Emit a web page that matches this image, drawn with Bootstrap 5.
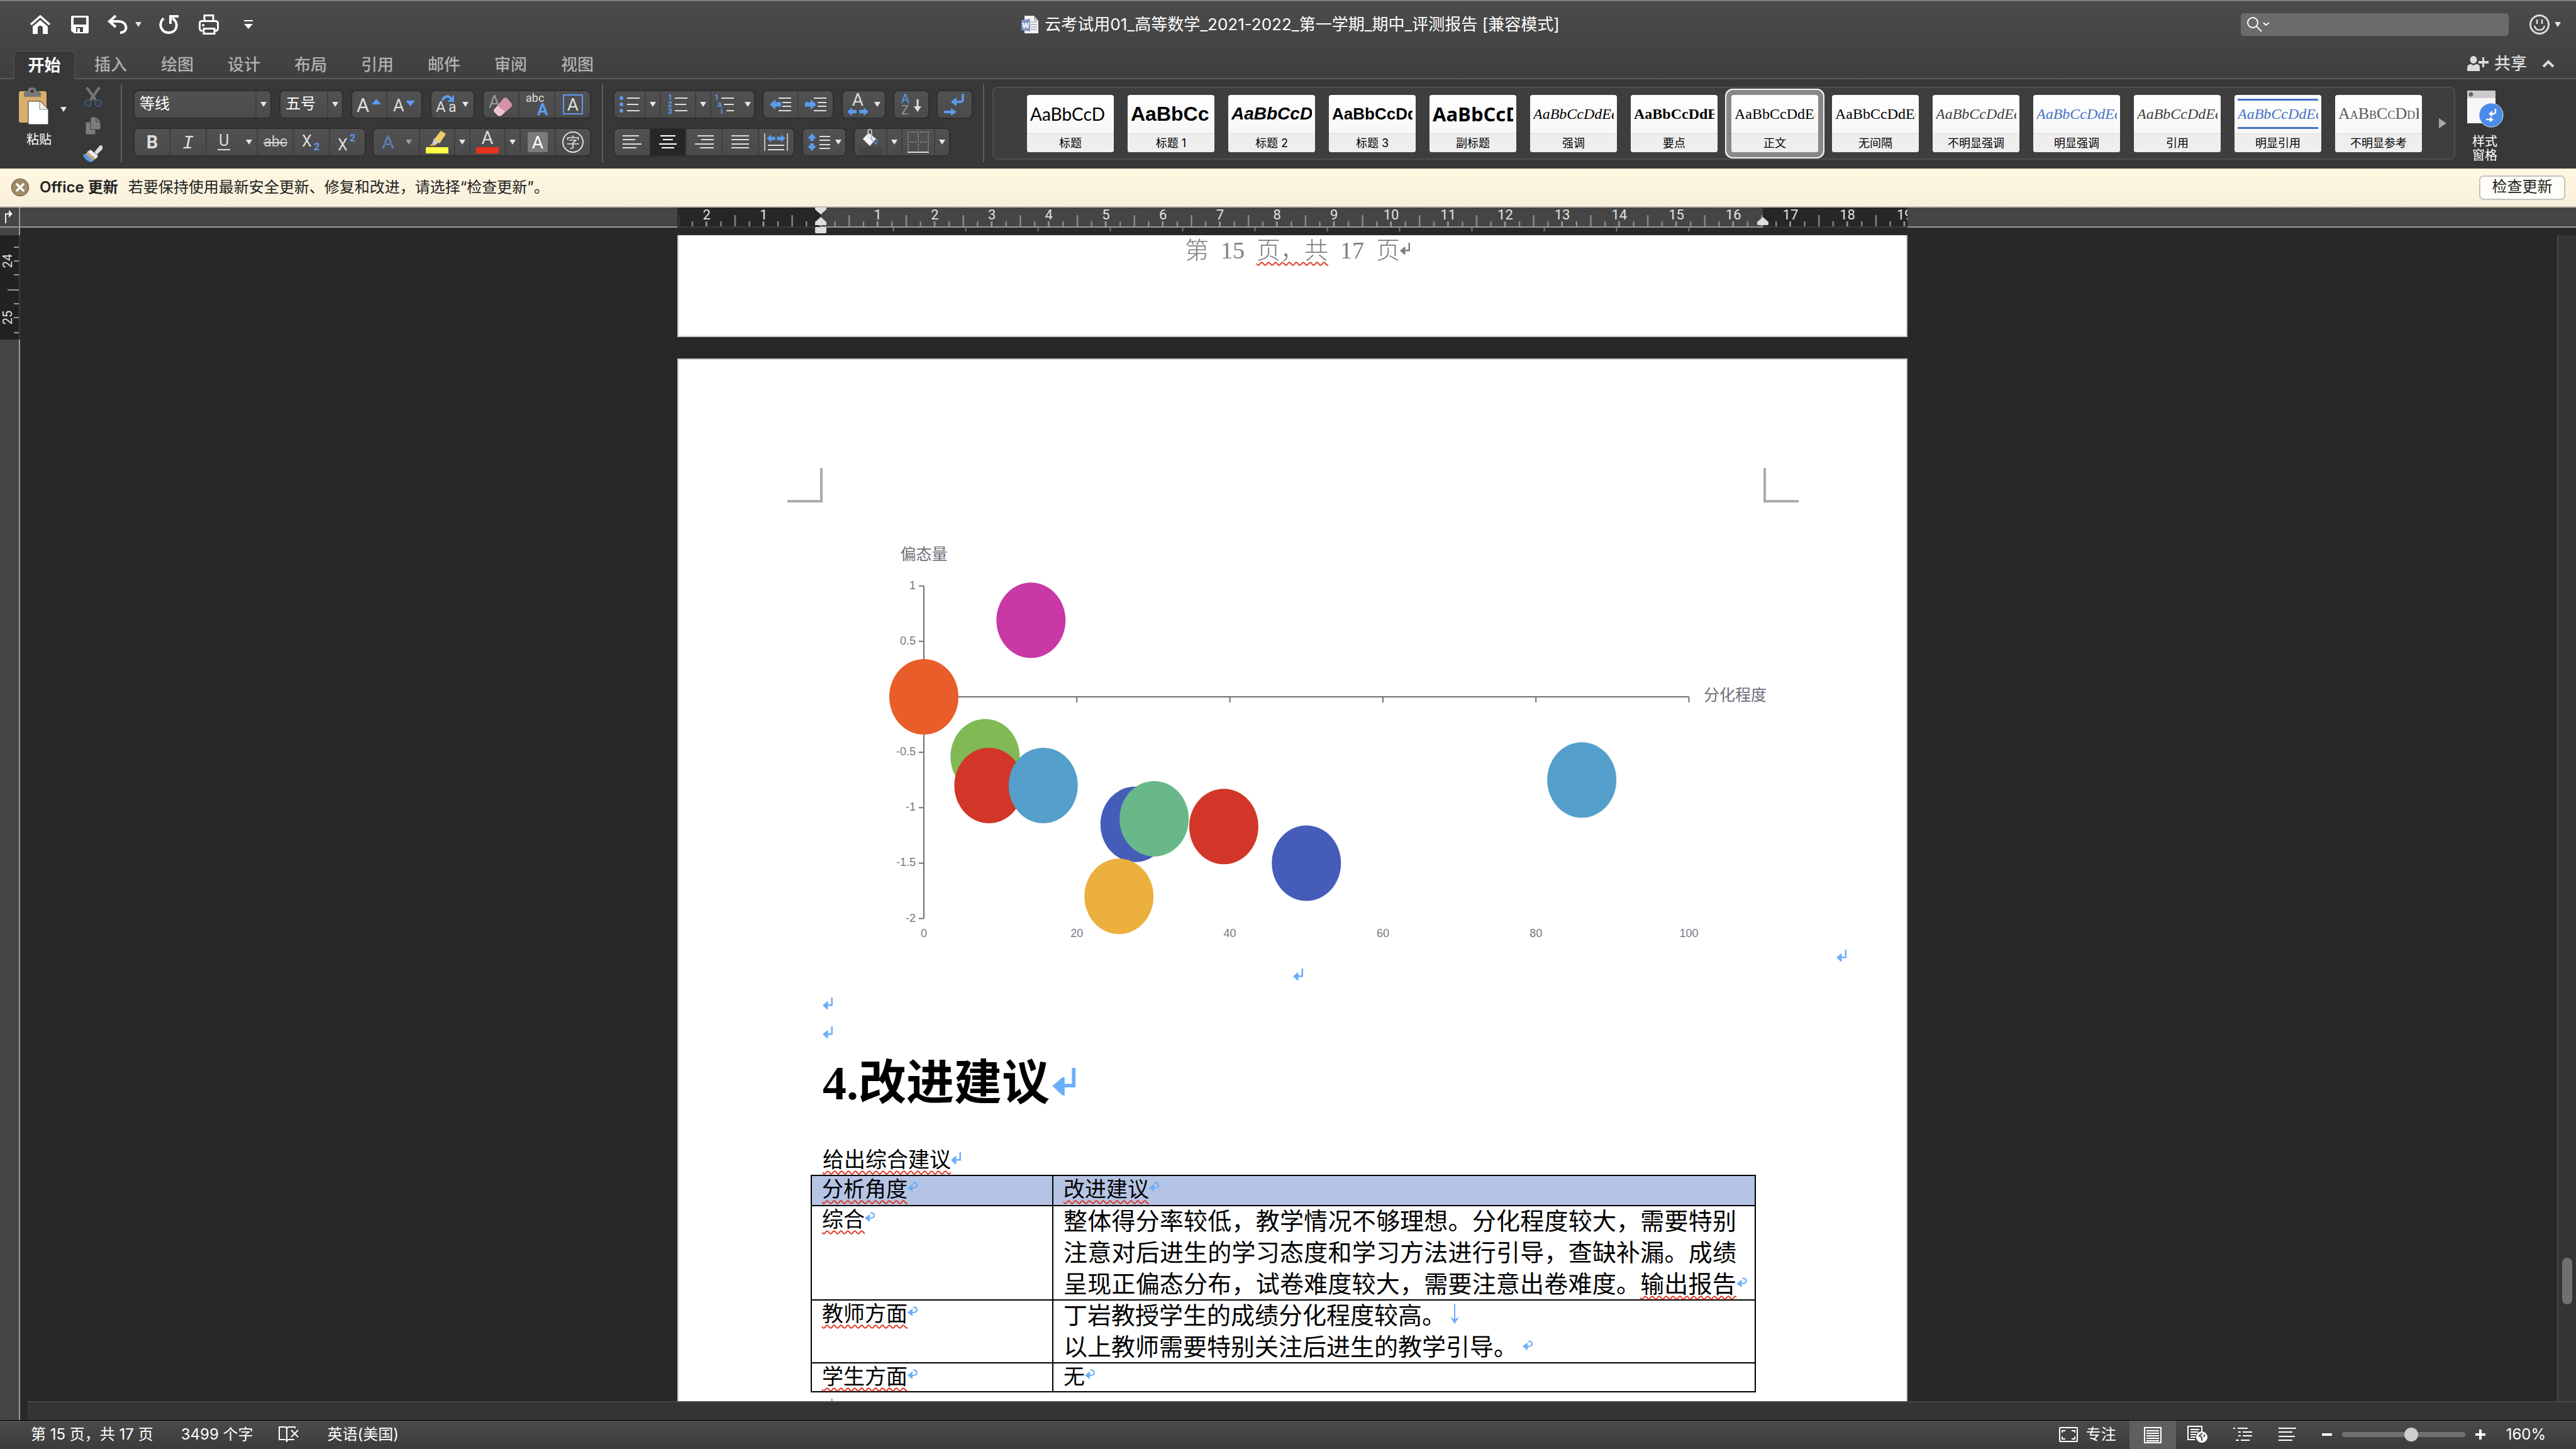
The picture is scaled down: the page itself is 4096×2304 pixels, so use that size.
<!DOCTYPE html>
<html lang="zh-CN">
<head>
<meta charset="utf-8">
<meta name="viewport" content="width=device-width, initial-scale=1">
<title>云考试用01_高等数学_2021-2022_第一学期_期中_评测报告</title>
<link href="https://cdn.jsdelivr.net/npm/bootstrap@5.3.0/dist/css/bootstrap.min.css" rel="stylesheet">
<style>
  :root { --ui: Inter, "Noto Sans CJK SC", sans-serif; --song: "Liberation Serif", "Noto Sans CJK SC", serif; --blue: #5b9bf0; --mark-blue: #6aaefb; }
  body { height: 100vh; overflow: hidden; background: #282828; color: #fff; font: 24px/32px var(--ui); }
  body > * { flex-shrink: 0; }
  button, select, input { font: inherit; color: inherit; }
  button { background: none; border: 0; padding: 0; display: flex; align-items: center; justify-content: center; }
  svg { display: block; flex: none; overflow: visible; }
  svg text { font-family: Roboto, "Noto Sans CJK SC", sans-serif; }
  .topbar { background: linear-gradient(#4b4b4b, #3f3f3f); border-top: 2px solid #7c7c7c; }
  .title-row { height: 74px; }
  .qat { flex: 1 1 0; padding-left: 32px; }
  .qat button { width: 63px; height: 48px; }
  .qat .undo-set { width: 79px; gap: 13px; }
  .doc-title { font-size: 26px; gap: 9px; }
  .title-tools { flex: 1 1 0; padding-right: 24px; gap: 33px; }
  .search-field { width: 426px; height: 36px; background: #6b6b6b; border-radius: 5px; padding-left: 10px; }
  .search-field input { background: none; border: 0; outline: 0; min-width: 0; }
  .tab-row { height: 50px; border-bottom: 2px solid #5c5c5c; padding-left: 17px; }
  .tab-row a { width: 106px; height: 50px; color: #b0b0b0; font-size: 26px; font-weight: 500; text-decoration: none; padding-top: 4px; }
  .tab-row a.current { width: 99px; margin: 4px 3px 0 4px; padding: 0; height: 46px; background: #383838; color: #fff; font-weight: 700; border: 2px solid #4c4c4c; border-bottom: 0; border-radius: 8px 8px 0 0; }
  .tab-tools { font-size: 26px; font-weight: 500; color: #dcdcdc; padding-right: 34px; gap: 24px; height: 50px; }
  .tab-tools button { gap: 9px; }
  .ribbon { height: 142px; background: #383838; padding: 8px 116px 0 0; }
  .vsep { width: 2px; height: 124px; background: #5e5e5e; }
  .vsep, .tool-rows, .paste-set { flex: none; }
  .rib-label { font-size: 20px; line-height: 22px; }
  .paste-set { width: 192px; padding: 5px 0 0 30px; }
  .paste-set .big { width: 48px; flex-direction: column; gap: 12px; }
  .paste-set .big .rib-label { margin-right: -16px; }
  .paste-set .drop { height: 70px; width: 46px; }
  .paste-set .small-set { width: 44px; margin-left: 2px; }
  .tool-rows { padding-top: 9px; gap: 14px; }
  .font-rows { width: 728px; margin: 0 17px 0 18px; }
  .para-rows { width: 572px; margin: 0 16px; }
  .tset { height: 46px; border: 2px solid #2e2e2e; border-radius: 8px; background: linear-gradient(#515151, #4b4b4b); overflow: hidden; }
  .tset button { height: 42px; flex: 1 1 0; }
  .tset > * + * { border-left: 2px solid #404040; }
  .tset button.drop { flex: 0 0 24px; }
  .tset button.drop-plain { flex: 0 0 24px; border-left: 0; }
  .tset button.w56 { flex: 0 0 56px; }
  .tset button.pressed { background: #262626; }
  .tset select { appearance: none; background: none; border: 0; outline: 0; flex: 1 1 0; min-width: 0; padding: 0 0 2px 8px; }
  .w70 { width: 71px; } .w58 { width: 58px; } .w102 { width: 102px; } .w114 { width: 114px; } .w154 { width: 154px; }
  .w173 { width: 173px; } .w220 { width: 220px; } .w226 { width: 226px; } .w289 { width: 289px; } .w348 { width: 348px; } .w370 { width: 370px; }
  .gap-11 { gap: 11px; }
  .gallery { margin: 4px 18px 0 -3px; height: 116px; border: 2px solid #4e4e4e; border-radius: 8px; background: #3e3e3e; padding: 0 12px 0 53px; gap: 22px; }
  .swatch { width: 138px; height: 91px; flex: none; flex-direction: column; align-items: stretch; border-radius: 4px; overflow: hidden; background: linear-gradient(#fff, #f7f7f7 66%); color: #000; }
  .swatch .sample { height: 61px; padding: 0 5px; display: flex; align-items: center; }
  .swatch .sample > span { overflow: hidden; white-space: nowrap; width: 128px; text-align: left; font: 24px/36px "Liberation Serif", serif; }
  .swatch .cap { height: 30px; background: #eee; border-top: 1px solid #dcdcdc; font-size: 18px; line-height: 30px; text-align: center; }
  .swatch.chosen { box-shadow: 0 0 0 8px #888, 0 0 0 10px #f2f2f2; }
  .swatch .sample .sans30 { font: 400 28px/36px Lato, sans-serif; }
  .swatch .sample .h1s { font: 700 32px/36px "Liberation Sans", sans-serif; }
  .swatch .sample .h2s { font: italic 700 28px/36px "Liberation Sans", sans-serif; }
  .swatch .sample .h3s { font: 700 26px/36px "Liberation Sans", sans-serif; }
  .swatch .sample .subs { font: 700 31px/36px "Open Sans", sans-serif; }
  .swatch .sample .ita { font-style: italic; }
  .swatch .sample .strong7 { font-weight: 700; }
  .swatch .sample .blue { color: #4472c4; }
  .swatch .sample .dim { color: #404040; }
  .swatch .sample .caps { color: #5a5a5a; font-variant: small-caps; font-size: 26px; }
  .swatch .sample .ruled { border: solid #4472c4; border-width: 3px 0; line-height: 42px; height: 48px; }
  .pane-btn { flex: none; flex-direction: column; width: 58px; gap: 12px; height: 126px; justify-content: flex-start; padding-top: 10px; }
  .notice { height: 62px; background: linear-gradient(#fff7e0, #f8f0dc); border-bottom: 2px solid #c3bfae; color: #222; padding: 0 17px 0 17px; }
  .notice strong { font-weight: 600; }
  .notice .upd { height: 39px; width: 137px; background: #fffdf8; border: 2px solid #c4c2bd; border-radius: 7px; color: #222; padding-bottom: 2px; }
  .hruler { height: 32px; background: #454545; border-bottom: 2px solid #999; }
  .hruler .track { padding: 0 30px 0 12px; }
  .ruler-corner { width: 32px; border-right: 2px solid #999; }
  .work { min-height: 0; flex: 1 1 0; }
  .vruler { width: 32px; }
  .vruler .off { border-right: 2px solid #999; background: #454545; min-height: 12px; }
  .canvas { min-width: 0; overflow: hidden; }
  .desk { padding-left: 12px; }
  .sheet { width: 1956px; background: #fff; border: 2px solid #c8c8c8; color: #000; }
  .sheet-a { height: 162px; border-top: 0; padding-top: 1px; font: 300 38px/46px var(--song); color: #7f7f7f; margin-top: 12px; }
  .sheet-b { margin-top: 34px; padding: 228px 227px 0 229px; font: 400 34px/46px var(--song); }
  .pm { display: inline-block; color: var(--mark-blue); vertical-align: 4px; }
  .pm-grey { color: #7f7f7f; }
  .pm-cell { vertical-align: 8px; }
  .pm-down { vertical-align: 0; }
  .pm-hang { margin-right: -18px; }
  .wavy { text-decoration: underline wavy #e0301e 2px; text-underline-offset: 5px; text-decoration-skip-ink: none; }
  .corner-box { left: 173px; right: 171px; top: 172px; height: 55px; }
  .corner-l { width: 56px; border: solid #aaa; border-width: 0 4px 4px 0; }
  .corner-r { width: 56px; border: solid #aaa; border-width: 0 0 4px 4px; }
  .chart-line { margin-right: -140px; }
  #labels text { font-family: "Liberation Sans", sans-serif; }
  .sheet h1 { font: 700 76px/108px var(--song); margin: 0 0 46px; }
  .advice { width: 1503px; margin: 0 0 0 -19px; border-collapse: collapse; }
  .advice th, .advice td { border: 2px solid #000; padding: 0 15px 0 16px; vertical-align: top; font-weight: 400; line-height: 44px; }
  .advice th { background: #b5c4e4; height: 48px; }
  .advice p { margin: -1px 14px -1px 0; font: 400 38px/50px var(--song); text-align: justify; }
  .advice .fill-last { text-align-last: justify; }
  .advice .c1 { width: 384px; }
  .vscroll { width: 30px; background: #343434; border-left: 2px solid #464646; margin-top: 12px; padding: 1626px 0 0 6px; }
  .vscroll i { display: block; width: 16px; height: 74px; border-radius: 8px; background: #707070; }
  .hscroll { flex: none; height: 30px; background: #343434; border-top: 2px solid #464646; margin-left: 12px; }
  .status { height: 46px; background: linear-gradient(#4b4b4b, #3b3b3b); border-top: 1px solid #000; padding: 0 48px 2px 49px; gap: 0; }
  .status .words { margin-left: 44px; }
  .status .proof { margin: 0 46px 0 40px; }
  .status .focus-mode { gap: 13px; margin-right: 21px; }
  .status .tile { background: #5f5f5f; width: 74px; height: 46px; margin-bottom: -2px; }
  .status .view { width: 71px; }
  .status .zoom-out { margin-left: 19px; }
  .status .pct { margin-left: 33px; }
  .status input[type=range] { appearance: none; width: 196px; height: 8px; border-radius: 4px; background: #707070; margin: 0 16px; }
  .status input[type=range]::-webkit-slider-thumb { appearance: none; width: 22px; height: 22px; border-radius: 50%; background: #cfcfcf; }
</style>
<script src="https://cdn.jsdelivr.net/npm/bootstrap@5.3.0/dist/js/bootstrap.bundle.min.js"></script>
</head>
<body class="d-flex flex-column">

<svg width="0" height="0" class="position-absolute" aria-hidden="true">
  <defs>
    <symbol id="dn" viewBox="0 0 10 8"><path d="M0 0h10L5 8z" fill="#e6e6e6"/></symbol>
    <symbol id="ret" viewBox="0 0 18 20"><path d="M13.500 0H16v13.500H8.500V19H7L0 12.500 7 6.500h1.500V11h5z" fill="currentColor"/></symbol>
    <symbol id="cellret" viewBox="0 0 17 16"><path d="M9 2c7-2 9 8 0 8H5" fill="none" stroke="currentColor" stroke-width="2.200"/><path d="M0 10 8 3.500V16z" fill="currentColor"/></symbol>
    <symbol id="ar" viewBox="0 0 18 16"><path d="M18 8 9 0v4.500H0v7h9V16z" fill="#5b9bf0"/></symbol>
    <symbol id="al" viewBox="0 0 18 16"><path d="M0 8 9 0v4.500h9v7H9V16z" fill="#5b9bf0"/></symbol>
  </defs>
</svg>

<header class="topbar">
  <div class="title-row d-flex align-items-center">
    <div class="qat d-flex">
      <button aria-label="主页"><svg width="32" height="30" viewBox="0 0 32 30"><path d="M1 15 16 2l15 13" fill="none" stroke="#fff" stroke-width="3.500"/><path d="M16 8 4 18v12h8V20q0-3 4-3t4 3v10h8V18z" fill="#fff"/></svg></button>
      <button aria-label="保存"><svg width="28" height="28" viewBox="0 0 28 28"><path d="M0 2q0-2 2-2h24q2 0 2 2v24q0 2-2 2H5l-5-4zM4 3v11h20V3zM8 18v8h2v-6h4v6h5v-8z" fill="#fff" fill-rule="evenodd"/></svg></button>
      <div class="undo-set d-flex justify-content-center align-items-center"><button class="w-auto" aria-label="撤消"><svg width="31" height="30" viewBox="0 0 31 30"><path d="M13 1 3 10l10 9M3 10h14c16 0 16 18 3 18" fill="none" stroke="#fff" stroke-width="4"/></svg></button><svg width="10" height="8"><use href="#dn"/></svg></div>
      <button aria-label="恢复"><svg width="30" height="30" viewBox="0 0 30 30"><path d="M6 5C-4 16 4 28 14 28c14 0 17-16 6-23" fill="none" stroke="#fff" stroke-width="4"/><path d="M17 14V2h13" fill="none" stroke="#fff" stroke-width="4"/></svg></button>
      <button aria-label="打印"><svg width="32" height="32" viewBox="0 0 32 32" fill="none" stroke="#fff" stroke-width="3"><path d="M9 11V1.500h14V11M6 26c-3 0-4.500-1-4.500-4v-8q0-3.500 4-3.500h21q4 0 4 3.500v8c0 3-1.500 4-4.500 4"/><path d="M8 22.500h17v8H8z"/><path d="M5 17h4"/></svg></button>
      <button aria-label="自定义"><svg width="14" height="14" viewBox="0 0 14 14"><path d="M0 0h14v2H0zM0 6h14l-7 8z" fill="#fff"/></svg></button>
    </div>
    <div class="doc-title d-flex align-items-center">
      <svg width="28" height="28" viewBox="0 0 28 28"><path d="M5 0h15l7 8v20H5z" fill="#f4f4f4"/><path d="M20 0v8h7z" fill="#bbb"/><path d="M15 10h10M15 14h10M15 18h10M15 22h10" stroke="#aaa" stroke-width="1.500"/><path d="M0 7 14 5v20L0 23z" fill="#7f96c8"/><text x="7" y="20" font-size="13" font-weight="700" text-anchor="middle" fill="#fff">W</text></svg>
      <span>云考试用01_高等数学_2021-2022_第一学期_期中_评测报告 [兼容模式]</span>
    </div>
    <div class="title-tools d-flex justify-content-end align-items-center">
      <label class="search-field d-flex align-items-center"><svg width="36" height="24" viewBox="0 0 36 24" fill="none" stroke="#fff" stroke-width="2"><circle cx="9" cy="9" r="8"/><path d="m15 15 8 8M26 9l4 4 5-4"/></svg><input type="search" aria-label="搜索"></label>
      <button class="gap-2" aria-label="反馈"><svg width="32" height="32" viewBox="0 0 32 32" fill="none" stroke="#ddd" stroke-width="3"><circle cx="16" cy="16" r="14.500"/><path d="M8 18c2 9 14 9 16 0M12 8v7M20 8v7" stroke-width="2.500"/></svg><svg width="10" height="8"><use href="#dn"/></svg></button>
    </div>
  </div>
  <nav class="tab-row d-flex">
    <a href="#" class="current d-flex align-items-center justify-content-center">开始</a>
    <a href="#" class="d-flex align-items-center justify-content-center">插入</a>
    <a href="#" class="d-flex align-items-center justify-content-center">绘图</a>
    <a href="#" class="d-flex align-items-center justify-content-center">设计</a>
    <a href="#" class="d-flex align-items-center justify-content-center">布局</a>
    <a href="#" class="d-flex align-items-center justify-content-center">引用</a>
    <a href="#" class="d-flex align-items-center justify-content-center">邮件</a>
    <a href="#" class="d-flex align-items-center justify-content-center">审阅</a>
    <a href="#" class="d-flex align-items-center justify-content-center">视图</a>
    <div class="tab-tools d-flex align-items-center ms-auto">
      <button><svg width="34" height="24" viewBox="0 0 34 24" fill="#dcdcdc"><ellipse cx="10" cy="6" rx="5.500" ry="6"/><path d="M0 24V18q1-5 6-5l4 2 4-2q6 0 6 5v6zM24 2h3v6h7v4h-7v6h-3v-6h-6V8h6z"/></svg>共享</button>
      <button aria-label="折叠功能区"><svg width="20" height="12" viewBox="0 0 20 12"><path d="m2 11 8-8 8 8" fill="none" stroke="#dcdcdc" stroke-width="4"/></svg></button>
    </div>
  </nav>
</header>

<section class="ribbon d-flex">
  <div class="paste-set d-flex align-items-start">
    <button class="big">
      <svg width="48" height="60" viewBox="0 0 48 60"><rect y="6" width="44" height="50" rx="3" fill="#d9ad6c"/><path d="M8 15V10q0-4 6-4 0-6 7-6t7 6q7 0 7 4v5z" fill="#777"/><circle cx="21" cy="6" r="2.500" fill="#383838"/><path d="M15 22h19l13 13v24H15z" fill="#fff" stroke="#333"/><path d="M33 22v13h13" fill="#eee" stroke="#888"/></svg>
      <span class="rib-label">粘贴</span>
    </button>
    <button class="drop" aria-label="粘贴选项"><svg width="10" height="8"><use href="#dn"/></svg></button>
    <div class="small-set d-flex flex-column align-items-center gap-3">
      <button aria-label="剪切"><svg width="28" height="31" viewBox="0 0 28 31"><path d="M4 0 18 20M24 0 10 20" stroke="#777" stroke-width="4"/><g fill="none" stroke="#3d5578" stroke-width="2.500"><circle cx="6" cy="25" r="4.700"/><circle cx="22" cy="25" r="4.700"/></g></svg></button>
      <button aria-label="复制"><svg width="24" height="28" viewBox="0 0 24 28" fill="#7c7c7c" stroke="#3a3a3a"><path d="M0 8h16v20H0z"/><path d="M8 0h9l7 8v12H8z"/><path d="M17 0v8h7"/></svg></button>
      <button aria-label="格式刷"><svg width="32" height="28" viewBox="0 0 32 28"><path d="m18 12 9-11 4 1v5l-9 9z" fill="#ddd"/><path d="m12 8 12 10-4 5L6 12z" fill="#eee"/><path d="M8 12 20 22l-4 4L3 15z" fill="#b7a58c"/><path d="m3 15 13 11-4 2Q2 24 0 16z" fill="#5b9bf0"/></svg></button>
    </div>
  </div>
  <div class="vsep"></div>
  <div class="tool-rows font-rows d-flex flex-column">
    <div class="d-flex justify-content-between">
      <div class="tset d-flex w220"><select aria-label="字体"><option>等线</option></select><button class="drop" aria-label="字体列表"><svg width="10" height="8"><use href="#dn"/></svg></button></div>
      <div class="tset d-flex w102"><select aria-label="字号"><option>五号</option></select><button class="drop" aria-label="字号列表"><svg width="10" height="8"><use href="#dn"/></svg></button></div>
      <div class="tset d-flex w114">
        <button aria-label="增大字号"><svg width="40" height="30" viewBox="0 0 40 30"><text x="0" y="27" font-size="31" fill="#ddd">A</text><path d="M24 15h15l-7.500-9z" fill="#5b9bf0"/></svg></button>
        <button aria-label="减小字号"><svg width="36" height="30" viewBox="0 0 36 30"><text x="0" y="26" font-size="27" fill="#ddd">A</text><path d="M20 9h15l-7.500 9z" fill="#5b9bf0"/></svg></button>
      </div>
      <div class="tset d-flex w70"><button class="gap-2" aria-label="更改大小写"><svg width="32" height="30" viewBox="0 0 32 30"><text x="-2" y="27" font-size="24" fill="#ddd">A</text><text x="18" y="27" font-size="23" fill="#ddd">a</text><path d="M8 9Q14-2 22 5" fill="none" stroke="#5b9bf0" stroke-width="4"/><path d="M27 0v11H16z" fill="#5b9bf0"/></svg><svg width="10" height="8"><use href="#dn"/></svg></button></div>
      <div class="tset d-flex w173">
        <button aria-label="清除格式"><svg width="38" height="38" viewBox="0 0 38 38"><text x="-1" y="24" font-size="28" fill="#999">A</text><path d="m8 27 15-18q3-2 6 1l6 7q2 3 0 6L20 36q-4 3-7 0l-5-5q-2-2 0-4z" fill="#d792a8"/><path d="m8 27 5-6 12 10-5 5q-4 3-7 0l-5-5q-2-2 0-4z" fill="#f0c5d2"/></svg></button>
        <button aria-label="拼音指南"><svg width="36" height="36" viewBox="0 0 36 36"><text x="0" y="14" font-size="18" fill="#ddd">abc</text><text x="18" y="35" font-size="26" font-weight="700" fill="#5b9bf0">A</text></svg></button>
        <button aria-label="字符边框"><svg width="32" height="32" viewBox="0 0 32 32"><rect x="1" y="1" width="30" height="30" fill="none" stroke="#5b9bf0" stroke-width="2"/><text x="16" y="26" font-size="28" text-anchor="middle" fill="#ddd">A</text></svg></button>
      </div>
    </div>
    <div class="d-flex justify-content-between">
      <div class="tset d-flex w370">
        <button aria-label="加粗"><svg width="20" height="22"><text x="10" y="21" font-size="29" font-weight="700" text-anchor="middle" fill="#ddd">B</text></svg></button>
        <button aria-label="倾斜"><svg width="16" height="22"><text x="8" y="21" font-size="30" font-style="italic" text-anchor="middle" fill="#ddd" style="font-family:'Liberation Mono'">I</text></svg></button>
        <button aria-label="下划线"><svg width="20" height="26"><text x="10" y="19" font-size="25" text-anchor="middle" fill="#ddd">U</text><path d="M0 25h20" stroke="#ddd" stroke-width="2"/></svg></button>
        <button class="drop-plain" aria-label="下划线样式"><svg width="10" height="8"><use href="#dn"/></svg></button>
        <button aria-label="删除线"><svg width="38" height="22"><text x="19" y="18" font-size="23" text-anchor="middle" fill="#ccc">abc</text><path d="M0 12h38" stroke="#ddd" stroke-width="2"/></svg></button>
        <button aria-label="下标"><svg width="30" height="28"><text x="0" y="21" font-size="25" fill="#ddd">X</text><text x="19" y="27" font-size="16" font-weight="700" fill="#5b9bf0">2</text></svg></button>
        <button aria-label="上标"><svg width="30" height="28"><text x="0" y="27" font-size="25" fill="#ddd">X</text><text x="19" y="13" font-size="16" font-weight="700" fill="#5b9bf0">2</text></svg></button>
      </div>
      <div class="tset d-flex w348">
        <button class="gap-3" aria-label="文本效果"><svg width="24" height="26"><text x="12" y="23" font-size="30" text-anchor="middle" fill="#8a98a8" stroke="#3f6795" stroke-width="1">A</text></svg><svg width="10" height="8" opacity=".5"><use href="#dn"/></svg></button>
        <button class="w56" aria-label="突出显示"><svg width="36" height="36" viewBox="0 0 36 36"><rect y="26" width="36" height="10" rx="1" fill="#ffff45"/><path d="m24 0 8 5-10 15-9-6z" fill="#f2cf68"/><path d="m13 12 8 6-6 5-5-2z" fill="#ccc"/><path d="m10 20-4 4h9z" fill="#e0ae3a"/></svg></button>
        <button class="drop" aria-label="突出显示颜色"><svg width="10" height="8"><use href="#dn"/></svg></button>
        <button class="w56" aria-label="字体颜色"><svg width="36" height="36" viewBox="0 0 36 36"><rect y="26" width="36" height="10" rx="1" fill="#e8311f"/><text x="18" y="21" font-size="29" text-anchor="middle" fill="#ddd">A</text></svg></button>
        <button class="drop" aria-label="字体颜色列表"><svg width="10" height="8"><use href="#dn"/></svg></button>
        <button class="w56" aria-label="字符底纹"><svg width="32" height="32" viewBox="0 0 32 32"><rect width="32" height="32" rx="3" fill="#7b7b7b"/><text x="16" y="26" font-size="28" text-anchor="middle" fill="#fff">A</text></svg></button>
        <button class="w56" aria-label="带圈字符"><svg width="34" height="34" viewBox="0 0 34 34"><circle cx="17" cy="17" r="16" fill="none" stroke="#ddd" stroke-width="2"/><text x="17" y="25" font-size="22" text-anchor="middle" fill="#ddd">字</text></svg></button>
      </div>
    </div>
  </div>
  <div class="vsep"></div>
  <div class="tool-rows para-rows d-flex flex-column">
    <div class="d-flex justify-content-between">
      <div class="tset d-flex w226">
        <button aria-label="项目符号"><svg width="32" height="28" viewBox="0 0 32 28"><g fill="#5b9bf0"><circle cx="3" cy="4" r="3"/><circle cx="3" cy="14" r="3"/><circle cx="3" cy="24" r="3"/></g><path d="M12 4h20M12 14h18M12 24h20" stroke="#ddd" stroke-width="2"/></svg></button>
        <button class="drop" aria-label="项目符号列表"><svg width="10" height="8"><use href="#dn"/></svg></button>
        <button class="w56" aria-label="编号"><svg width="32" height="30" viewBox="0 0 32 30"><g font-size="12" font-weight="700" fill="#5b9bf0"><text x="0" y="8">1</text><text x="0" y="19">2</text><text x="0" y="30">3</text></g><path d="M11 5h20M11 15h18M11 25h20" stroke="#ddd" stroke-width="2"/></svg></button>
        <button class="drop" aria-label="编号列表"><svg width="10" height="8"><use href="#dn"/></svg></button>
        <button class="gap-3" style="flex:0 0 70px" aria-label="多级列表"><svg width="32" height="30" viewBox="0 0 32 30"><g font-size="12" font-weight="700" fill="#5b9bf0"><text x="0" y="8">1</text><text x="5" y="19">a</text><text x="10" y="30">i</text></g><path d="M11 5h20M15 15h16M19 25h12" stroke="#ddd" stroke-width="2"/></svg><svg width="10" height="8"><use href="#dn"/></svg></button>
      </div>
      <div class="tset d-flex w114">
        <button aria-label="减少缩进"><svg width="34" height="22" viewBox="0 0 34 22"><use href="#al" y="2" width="18" height="18"/><path d="M14 1h20M20 8h14M20 14h14M14 21h20" stroke="#ddd" stroke-width="2"/></svg></button>
        <button aria-label="增加缩进"><svg width="34" height="22" viewBox="0 0 34 22"><use href="#ar" y="2" width="18" height="18"/><path d="M14 1h20M20 8h14M20 14h14M14 21h20" stroke="#ddd" stroke-width="2"/></svg></button>
      </div>
      <div class="tset d-flex w70"><button class="gap-2" aria-label="中文版式"><svg width="36" height="36" viewBox="0 0 36 36"><text x="18" y="20" font-size="28" text-anchor="middle" fill="#ddd">A</text><use href="#al" y="23" width="17" height="13"/><use href="#ar" x="19" y="23" width="17" height="13"/></svg><svg width="10" height="8"><use href="#dn"/></svg></button></div>
      <div class="tset d-flex w58"><button aria-label="排序"><svg width="32" height="34" viewBox="0 0 32 34"><text x="0" y="15" font-size="20" fill="#5b9bf0">A</text><text x="0" y="33" font-size="20" fill="#999">Z</text><path d="M26 9v14" stroke="#ddd" stroke-width="3"/><path d="M20 20h12l-6 9z" fill="#ddd"/></svg></button></div>
      <div class="tset d-flex w58"><button aria-label="显示编辑标记"><svg width="34" height="36" viewBox="0 0 34 36"><path d="M30 1v9q0 4-5 4h-6" fill="none" stroke="#5b9bf0" stroke-width="3.500"/><path d="m11 14 9-7v14z" fill="#5b9bf0"/><path d="M0 30h12" stroke="#5b9bf0" stroke-width="4"/><path d="m20 30-9-6v12z" fill="#5b9bf0"/></svg></button></div>
    </div>
    <div class="d-flex gap-11">
      <div class="tset d-flex w289">
        <button aria-label="左对齐"><svg width="30" height="22" viewBox="0 0 30 22"><path d="M0 1h26M0 7h20M0 14h30M0 20h22" stroke="#ddd" stroke-width="2"/></svg></button>
        <button class="pressed" aria-label="居中"><svg width="28" height="22" viewBox="0 0 28 22"><path d="M2 1h24M6 7h16M0 14h28M4 20h20" stroke="#fff" stroke-width="2"/></svg></button>
        <button aria-label="右对齐"><svg width="30" height="22" viewBox="0 0 30 22"><path d="M4 1h26M10 7h20M0 14h30M8 20h22" stroke="#ddd" stroke-width="2"/></svg></button>
        <button aria-label="两端对齐"><svg width="28" height="22" viewBox="0 0 28 22"><path d="M0 1h28M0 7h28M0 14h28M0 20h28" stroke="#ddd" stroke-width="2"/></svg></button>
        <button aria-label="分散对齐"><svg width="38" height="28" viewBox="0 0 38 28"><path d="M1 0v28M37 0v28" stroke="#bbb" stroke-width="2"/><use href="#al" x="4" y="2" width="14" height="12"/><use href="#ar" x="20" y="2" width="14" height="12"/><path d="M6 19h26M6 26h26" stroke="#ddd" stroke-width="2"/></svg></button>
      </div>
      <div class="tset d-flex w70"><button class="gap-2" aria-label="行距"><svg width="36" height="28" viewBox="0 0 36 28"><path d="M7 0 0 8h4v4h6V8h4zM7 28l-7-8h4v-4h6v4h4z" fill="#5b9bf0"/><path d="M19 5h17M19 11h17M19 18h17M19 24h17" stroke="#ddd" stroke-width="2"/></svg><svg width="10" height="8"><use href="#dn"/></svg></button></div>
      <div class="tset d-flex w154">
        <button aria-label="底纹"><svg width="34" height="38" viewBox="0 0 34 38"><rect y="28" width="34" height="10" rx="1" fill="#464646" stroke="#3a3a3a"/><path d="m14 4 12 10-10 11L5 14z" fill="#f4f4f4"/><path d="M13 8V2q0-3 3-3t3 3v12" fill="none" stroke="#bbb" stroke-width="2"/><path d="m11 7 15 16q4-2 2-8l-9-8q9 6 9 15" fill="#5b9bf0"/></svg></button>
        <button class="drop" aria-label="底纹颜色"><svg width="10" height="8"><use href="#dn"/></svg></button>
        <button aria-label="边框"><svg width="34" height="34" viewBox="0 0 34 34"><path d="M0 1h34M0 17h34M1 0v30M17 0v30M33 0v30" stroke="#8d8d8d" stroke-width="2" stroke-dasharray="2 2"/><path d="M0 33h34" stroke="#ddd" stroke-width="2"/></svg></button>
        <button class="drop" aria-label="边框列表"><svg width="10" height="8"><use href="#dn"/></svg></button>
      </div>
    </div>
  </div>
  <div class="vsep me-3"></div>
  <div class="gallery d-flex align-items-center flex-fill">
    <button class="swatch"><span class="sample"><span class="sans30">AaBbCcD</span></span><span class="cap">标题</span></button>
    <button class="swatch"><span class="sample"><span class="h1s">AaBbCc</span></span><span class="cap">标题 1</span></button>
    <button class="swatch"><span class="sample"><span class="h2s">AaBbCcD</span></span><span class="cap">标题 2</span></button>
    <button class="swatch"><span class="sample"><span class="h3s">AaBbCcDd</span></span><span class="cap">标题 3</span></button>
    <button class="swatch"><span class="sample"><span class="subs">AaBbCcD</span></span><span class="cap">副标题</span></button>
    <button class="swatch"><span class="sample"><span class="ita">AaBbCcDdEe</span></span><span class="cap">强调</span></button>
    <button class="swatch"><span class="sample"><span class="strong7">AaBbCcDdE</span></span><span class="cap">要点</span></button>
    <button class="swatch chosen"><span class="sample"><span>AaBbCcDdEe</span></span><span class="cap">正文</span></button>
    <button class="swatch"><span class="sample"><span>AaBbCcDdEe</span></span><span class="cap">无间隔</span></button>
    <button class="swatch"><span class="sample"><span class="ita dim">AaBbCcDdEe</span></span><span class="cap">不明显强调</span></button>
    <button class="swatch"><span class="sample"><span class="ita blue">AaBbCcDdEe</span></span><span class="cap">明显强调</span></button>
    <button class="swatch"><span class="sample"><span class="ita dim">AaBbCcDdEe</span></span><span class="cap">引用</span></button>
    <button class="swatch"><span class="sample"><span class="ita blue ruled">AaBbCcDdEe</span></span><span class="cap">明显引用</span></button>
    <button class="swatch"><span class="sample"><span class="caps">AaBbCcDdE</span></span><span class="cap">不明显参考</span></button>
    <button class="ms-auto" aria-label="更多样式"><svg width="12" height="16" viewBox="0 0 12 16"><path d="M0 0v16l12-8z" fill="#a8a8a8"/></svg></button>
  </div>
  <button class="pane-btn">
    <svg width="56" height="58" viewBox="0 0 56 58"><path d="M0 2q0-2 2-2h41q2 0 2 2v50H0z" fill="#f7f7f7"/><path d="M0 2q0-2 2-2h41q2 0 2 2v10H0z" fill="#ccc"/><circle cx="6" cy="6" r="3.500" fill="#666"/><circle cx="38" cy="39" r="19" fill="#4a8be8" stroke="#dbe6f8" stroke-width="1"/><path d="M45 29v5q0 3-5 3h-2M30 46h6" fill="none" stroke="#fff" stroke-width="2.500"/><path d="m34 37 6-5v10zM42 46l-6-4.500v9z" fill="#fff"/></svg>
    <span class="rib-label">样式<br>窗格</span>
  </button>
</section>

<section class="notice d-flex align-items-center">
  <button class="me-3" aria-label="关闭"><svg width="30" height="30" viewBox="0 0 30 30"><circle cx="15" cy="15" r="13.500" fill="#a08c69" stroke="#7f6d4d" stroke-width="1.500"/><path d="m9 9 12 12M21 9 9 21" stroke="#fff" stroke-width="3.500"/></svg></button>
  <strong class="me-3">Office 更新</strong>
  <span>若要保持使用最新安全更新、修复和改进，请选择“检查更新”。</span>
  <button class="upd ms-auto">检查更新</button>
</section>

<div class="hruler d-flex">
  <div class="ruler-corner"><svg width="30" height="30" viewBox="0 0 30 30"><path d="M9 25V10h7" fill="none" stroke="#eee" stroke-width="2"/><path d="m14 4 6 6-6 6z" fill="#eee"/></svg></div>
  <div class="track flex-fill d-flex justify-content-center">
    <svg id="hr" width="1956" height="32" viewBox="0 0 1956 32">
      <defs>
        <pattern id="tk" x="227" width="90.7" height="32" patternUnits="userSpaceOnUse"><path d="M1 22v8M23.700 22v8M46.300 12v18M69 22v8M91 22v8" stroke="#999" stroke-width="2"/></pattern>
        <clipPath id="rc"><path d="M0 0h1956v32H0z"/></clipPath>
      </defs>
      <path d="M0 0h228v32H0zM1726 0h230v32h-230z" fill="#262626"/>
      <path d="M0 31h228M1726 31h230" stroke="#3a3a3a" stroke-width="2"/>
      <path d="M2 0h1954v30H2z" fill="url(#tk)"/>
      <g id="hnums" font-size="22" fill="#e2e2e2" text-anchor="middle" clip-path="url(#rc)"></g>
      <path id="stops" stroke="#777" stroke-width="2"/>
      <g fill="#dedede"><path d="M219 0h18v3l-9 8-9-8zM228 15l9 8v5h-18v-5z"/><rect x="219" y="31" width="18" height="10" rx="2"/><path d="m1726 15 9 8v3q0 2-2 2h-14q-2 0-2-2v-3z"/></g>
    </svg>
  </div>
</div>

<main class="work d-flex">
  <div class="vruler d-flex flex-column">
    <div class="off"></div>
    <svg width="32" height="166" viewBox="0 0 32 166"><path d="M0 0h32v166H0z" fill="#222"/><path d="M22 19h8M22 41h8M22 63h8M12 87h18M22 109h8M22 131h8M22 155h8" stroke="#999" stroke-width="2"/><path d="M31 0v166" stroke="#3a3a3a" stroke-width="2"/><g font-size="20" fill="#e2e2e2" text-anchor="middle"><text transform="translate(19 41) rotate(-90)">24</text><text transform="translate(19 131) rotate(-90)">25</text></g></svg>
    <div class="off flex-fill"></div>
  </div>
  <div class="flex-fill d-flex flex-column canvas">
    <div class="d-flex work">
      <div class="flex-fill canvas desk">
        <div class="sheet sheet-a mx-auto text-center">第&ensp;15&ensp;<span class="wavy">页，共</span>&ensp;17&ensp;页<svg class="pm pm-grey pm-hang" width="18" height="22"><use href="#ret"/></svg></div>
        <article class="sheet sheet-b mx-auto position-relative">
          <div class="corner-box d-flex justify-content-between position-absolute"><div class="corner-l"></div><div class="corner-r"></div></div>
          <div class="chart-line d-flex align-items-end">
            <svg id="chart" width="1612" height="730" viewBox="0 0 1612 730" role="img" aria-label="分化程度与偏态量">
              <g stroke="#6e7079" stroke-width="2" fill="none"><path id="axes"/></g>
              <g id="labels" font-size="18" fill="#777983"></g>
              <g font-size="25" fill="#6e7079"><text x="161" y="90" text-anchor="middle">偏态量</text><text x="1401" y="314">分化程度</text></g>
              <g id="bubbles"></g>
            </svg>
            <svg class="pm" width="18" height="20"><use href="#ret"/></svg>
          </div>
          <div class="text-center"><svg class="pm pm-hang" width="18" height="20"><use href="#ret"/></svg></div>
          <div><svg class="pm" width="18" height="20"><use href="#ret"/></svg></div>
          <div><svg class="pm" width="18" height="20"><use href="#ret"/></svg></div>
          <h1>4.改进建议<svg class="pm ms-1" width="42" height="46"><use href="#ret"/></svg></h1>
          <div><span class="wavy">给出综合建议</span><svg class="pm" width="18" height="20"><use href="#ret"/></svg></div>
          <table class="advice">
            <thead><tr><th class="c1" scope="col"><span class="wavy">分析角度</span><svg class="pm pm-cell" width="17" height="16"><use href="#cellret"/></svg></th><th scope="col"><span class="wavy">改进建议</span><svg class="pm pm-cell" width="17" height="16"><use href="#cellret"/></svg></th></tr></thead>
            <tbody>
              <tr><td><span class="wavy">综合</span><svg class="pm pm-cell" width="17" height="16"><use href="#cellret"/></svg></td><td><p class="fill-last">整体得分率较低，教学情况不够理想。分化程度较大，需要特别注意对后进生的学习态度和学习方法进行引导，查缺补漏。成绩呈现正偏态分布，试卷难度较大，需要注意出卷难度。<span class="wavy">输出报告</span><svg class="pm pm-cell pm-hang" width="18" height="16"><use href="#cellret"/></svg></p></td></tr>
              <tr><td><span class="wavy">教师方面</span><svg class="pm pm-cell" width="17" height="16"><use href="#cellret"/></svg></td><td><p>丁岩教授学生的成绩分化程度较高。<svg class="pm pm-down" width="30" height="32" viewBox="0 0 30 32"><path d="M14 0v28" stroke="currentColor" stroke-width="2"/><path d="m7 21 7 11 7-11-7 4z" fill="currentColor"/></svg><br>以上教师需要特别关注后进生的教学引导。<svg class="pm pm-cell ms-2" width="17" height="16"><use href="#cellret"/></svg></p></td></tr>
              <tr><td><span class="wavy">学生方面</span><svg class="pm pm-cell" width="17" height="16"><use href="#cellret"/></svg></td><td>无<svg class="pm pm-cell" width="17" height="16"><use href="#cellret"/></svg></td></tr>
            </tbody>
          </table>
          <div><svg class="pm" width="18" height="20"><use href="#ret"/></svg></div>
        </article>
      </div>
      <div class="vscroll"><i></i></div>
    </div>
    <div class="hscroll"></div>
  </div>
</main>

<footer class="status d-flex align-items-center">
  <span>第 15 页，共 17 页</span>
  <span class="words">3499 个字</span>
  <button class="proof" aria-label="校对"><svg width="32" height="26" viewBox="0 0 32 26" fill="none" stroke="#fff" stroke-width="2"><path d="M26 3V1H16q-3 0-3 3 0-3-3-3H1v20h9q3 0 3 4 0-4 3-4h9M13 4v18M20 6l11 11M31 6 20 17"/></svg></button>
  <span>英语(美国)</span>
  <button class="focus-mode ms-auto"><svg width="30" height="24" viewBox="0 0 30 24" fill="none" stroke="#fff" stroke-width="2"><rect x="1" y="1" width="28" height="22" rx="1"/><path d="M5 9V6h5M20 6h5v3M5 15v4h5M20 19h5v-4"/></svg>专注</button>
  <button class="tile" aria-label="页面视图"><svg width="28" height="26" viewBox="0 0 28 26" fill="none" stroke="#fff" stroke-width="2"><rect x="1" y="1" width="26" height="24"/><path d="M4 6h20M4 10h20M4 14h20M4 18h20M4 22h20"/></svg></button>
  <button class="view" aria-label="Web 版式"><svg width="34" height="28" viewBox="0 0 34 28" fill="none" stroke="#fff" stroke-width="2"><path d="M12 22H1V1h22v8M5 6h14M5 10h12M5 14h9M5 18h8"/><circle cx="23" cy="18" r="9" fill="#fff" stroke="none"/><path d="m24 12-5 4 4 3v5M28 14l-2 4" stroke="#444"/></svg></button>
  <button class="view" aria-label="大纲"><svg width="30" height="22" viewBox="0 0 30 22" stroke="#fff" stroke-width="2"><path d="M0 1h3M7 1h16M8 7h4M15 7h15M8 13h4M15 13h15M4 20h5M12 20h14"/></svg></button>
  <button class="view" aria-label="草稿"><svg width="28" height="22" viewBox="0 0 28 22" stroke="#fff" stroke-width="2"><path d="M0 1h28M0 7h22M0 14h26M0 20h22"/></svg></button>
  <button class="zoom-out" aria-label="缩小"><svg width="16" height="16" viewBox="0 0 16 16"><path d="M0 8h16" stroke="#fff" stroke-width="4"/></svg></button>
  <input type="range" min="0" max="100" value="57" aria-label="显示比例">
  <button aria-label="放大"><svg width="16" height="16" viewBox="0 0 16 16"><path d="M0 8h16M8 0v16" stroke="#fff" stroke-width="4"/></svg></button>
  <span class="pct">160%</span>
</footer>

<script>
  const NS = 'http://www.w3.org/2000/svg';
  function add(parent, tag, attrs, text) {
    const el = document.createElementNS(NS, tag);
    for (const k in attrs) el.setAttribute(k, attrs[k]);
    if (text !== undefined) el.textContent = text;
    document.getElementById(parent).appendChild(el);
  }
  // Horizontal ruler: centimetres counted both ways from the left margin
  for (let n = -2; n <= 19; n++) if (n) add('hnums', 'text', { x: 228 + n * 90.7, y: 19 }, Math.abs(n));
  document.getElementById('stops').setAttribute('d', Array.from({ length: 12 }, (_, i) => `M${343.5 + i * 115} 32v6`).join(''));

  // Bubble chart
  const X = v => 161 + v * 12.165, Y = v => 308 - v * 176.3;
  let d = `M${X(0)} ${Y(1)}V${Y(-2)}M${X(0)} ${Y(0)}H${X(100)}`;
  [1, 0.5, -0.5, -1, -1.5, -2].forEach(v => {
    d += `M${X(0) - 8} ${Y(v)}h8`;
    add('labels', 'text', { x: 148, y: Y(v) + 5, 'text-anchor': 'end' }, v);
  });
  [0, 20, 40, 60, 80, 100].forEach(v => {
    if (v) d += `M${X(v)} ${Y(0)}v9`;
    add('labels', 'text', { x: X(v), y: 690, 'text-anchor': 'middle' }, v);
  });
  document.getElementById('axes').setAttribute('d', d);
  [[14, 0.69, '#c939a6'], [0, 0, '#e85d29'], [8, -0.54, '#80b956'], [8.5, -0.8, '#d23629'], [15.6, -0.8, '#549fcb'],
   [27.6, -1.15, '#455db9'], [30.1, -1.1, '#68b88a'], [39.2, -1.17, '#d23629'], [25.5, -1.8, '#ecb03f'],
   [50, -1.5, '#455db9'], [86, -0.75, '#549fcb']]
    .forEach(([x, y, c]) => add('bubbles', 'ellipse', { cx: X(x), cy: Y(y), rx: 55, ry: 60, fill: c }));
</script>
</body>
</html>
